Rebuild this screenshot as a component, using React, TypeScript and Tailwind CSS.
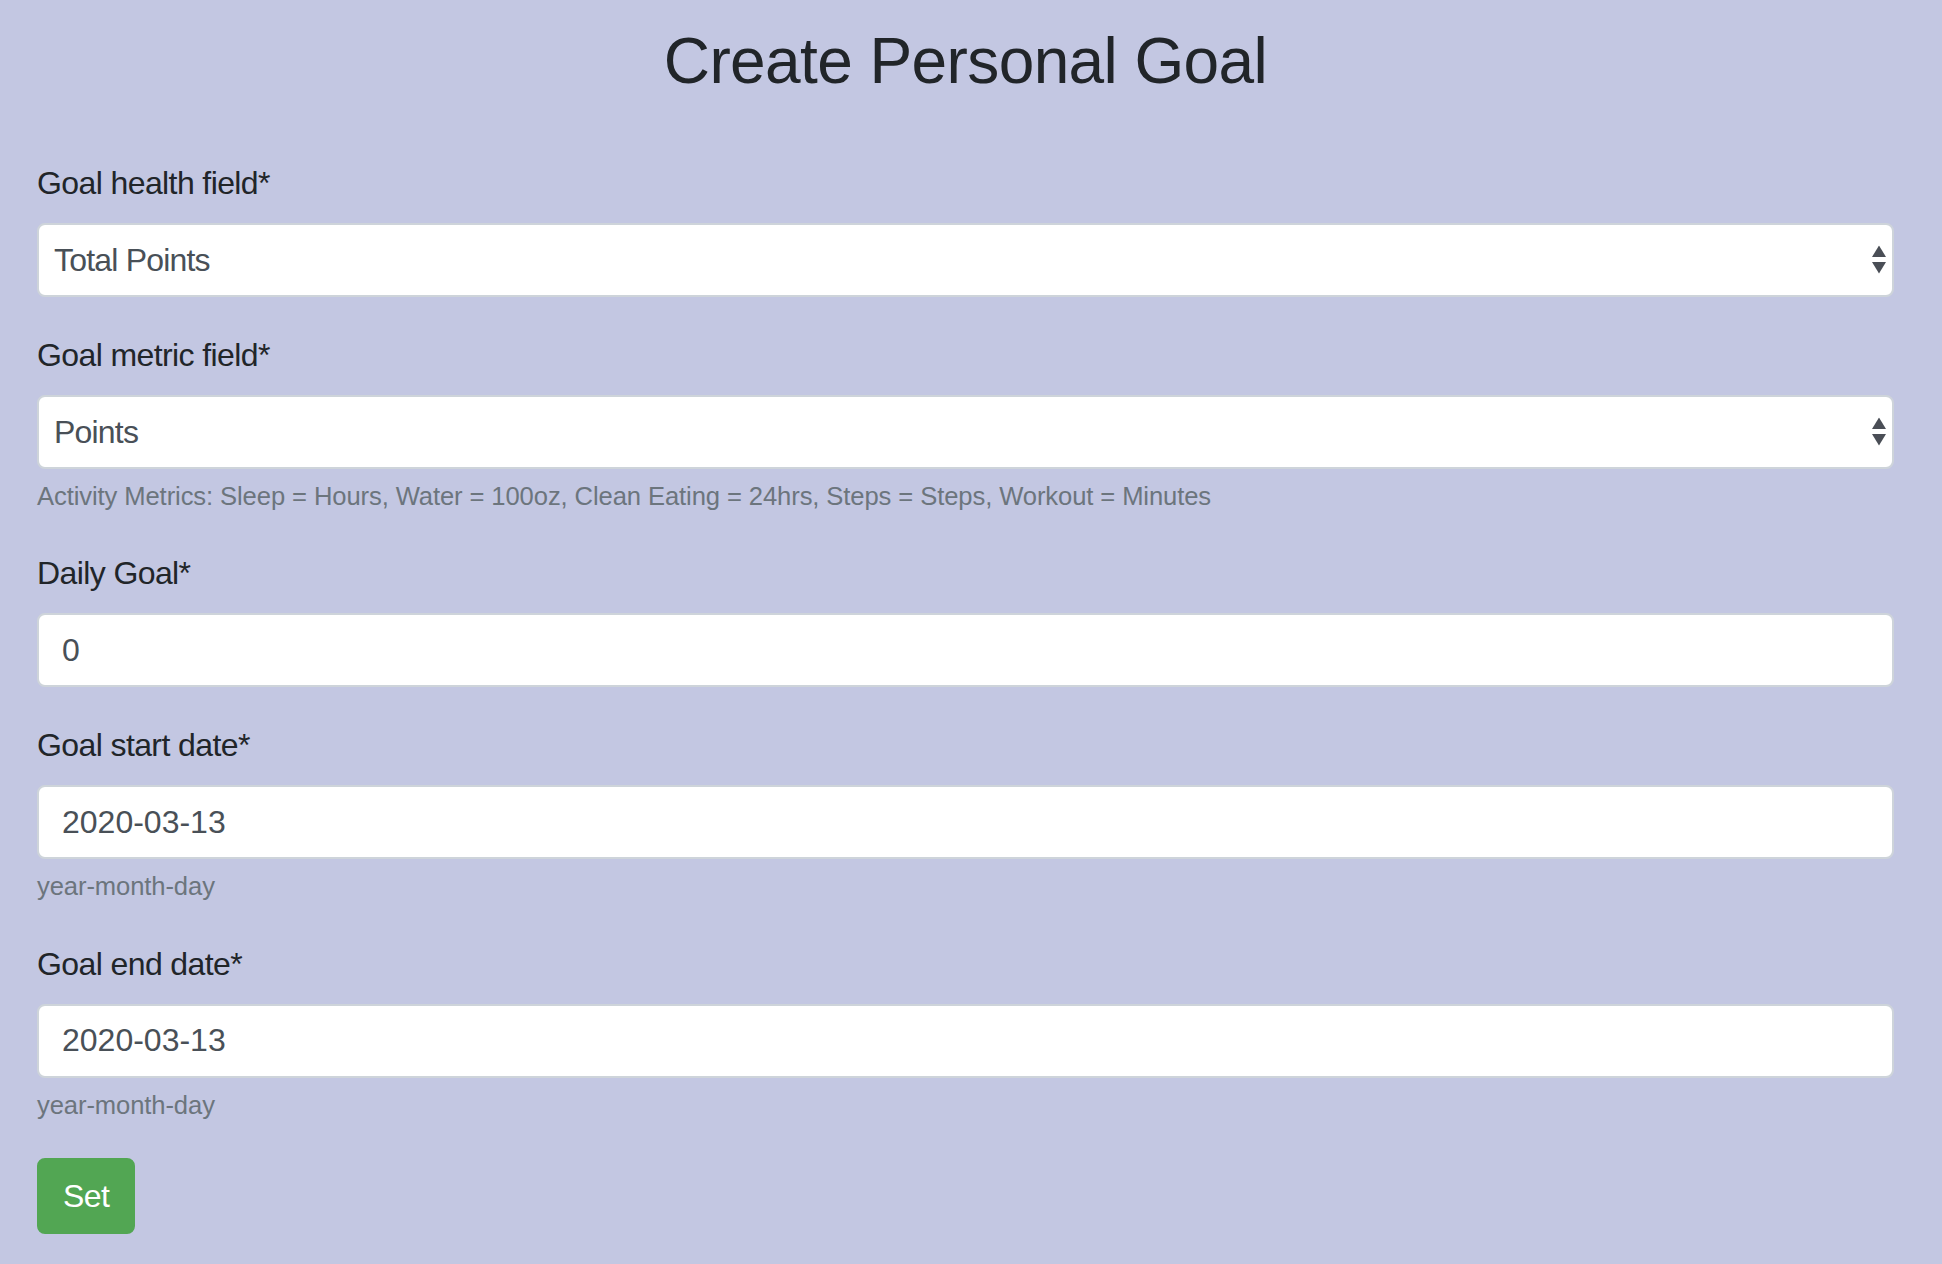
import type { ReactNode } from "react"

function SelectArrows() {
  return (
    <svg
      className="pointer-events-none absolute right-[8px] top-1/2 -translate-y-1/2"
      width="14"
      height="29"
      viewBox="0 0 14 29"
    >
      <path d="M7 0 L14 11.5 L0 11.5 Z" fill="#4a4e56" />
      <path d="M0 16.5 L14 16.5 L7 28 Z" fill="#4a4e56" />
    </svg>
  )
}

function Field({ label, help, children }: { label: string; help?: string; children: ReactNode }) {
  return (
    <div className="mb-[34px]">
      <label className="block text-[32px] leading-[48px] tracking-[-0.6px] mb-4 text-[#212529]">{label}</label>
      {children}
      {help && <small className="block mt-2 text-[25.6px] leading-[38.4px] tracking-[-0.1px] text-[#6c757d]">{help}</small>}
    </div>
  )
}

function Select({ value }: { value: string }) {
  return (
    <div className="relative">
      <select
        defaultValue={value}
        className="block w-full h-[74px] appearance-none rounded-lg border-2 border-[#ced4da] bg-white pl-[15px] pr-10 text-[32px] tracking-[-0.8px] text-[#495057] outline-none"
      >
        <option>{value}</option>
      </select>
      <SelectArrows />
    </div>
  )
}

function Input({ value }: { value: string }) {
  return (
    <input
      readOnly
      defaultValue={value}
      className="block w-full h-[74px] rounded-lg border-2 border-[#ced4da] bg-white px-[23px] text-[32px] text-[#495057] outline-none"
    />
  )
}

export default function App() {
  return (
    <div className="min-h-screen bg-[#c3c7e2] pl-[37px] pr-[48px] pt-[23px] pb-10 font-['Liberation_Sans',Arial,sans-serif]">
      <h2 className="text-center text-[64px] leading-[1.2] tracking-[-0.6px] font-medium text-[#212529] mb-[59px]">
        Create Personal Goal
      </h2>

      <form>
        <Field label="Goal health field*">
          <Select value="Total Points" />
        </Field>

        <Field
          label="Goal metric field*"
          help="Activity Metrics: Sleep = Hours, Water = 100oz, Clean Eating = 24hrs, Steps = Steps, Workout = Minutes"
        >
          <Select value="Points" />
        </Field>

        <Field label="Daily Goal*">
          <Input value="0" />
        </Field>

        <Field label="Goal start date*" help="year-month-day">
          <Input value="2020-03-13" />
        </Field>

        <Field label="Goal end date*" help="year-month-day">
          <Input value="2020-03-13" />
        </Field>

        <button
          type="button"
          className="rounded-lg border-2 border-[#52a653] bg-[#52a653] px-6 py-3 text-[32px] leading-[48px] tracking-[-0.6px] text-white"
        >
          Set
        </button>
      </form>
    </div>
  )
}
